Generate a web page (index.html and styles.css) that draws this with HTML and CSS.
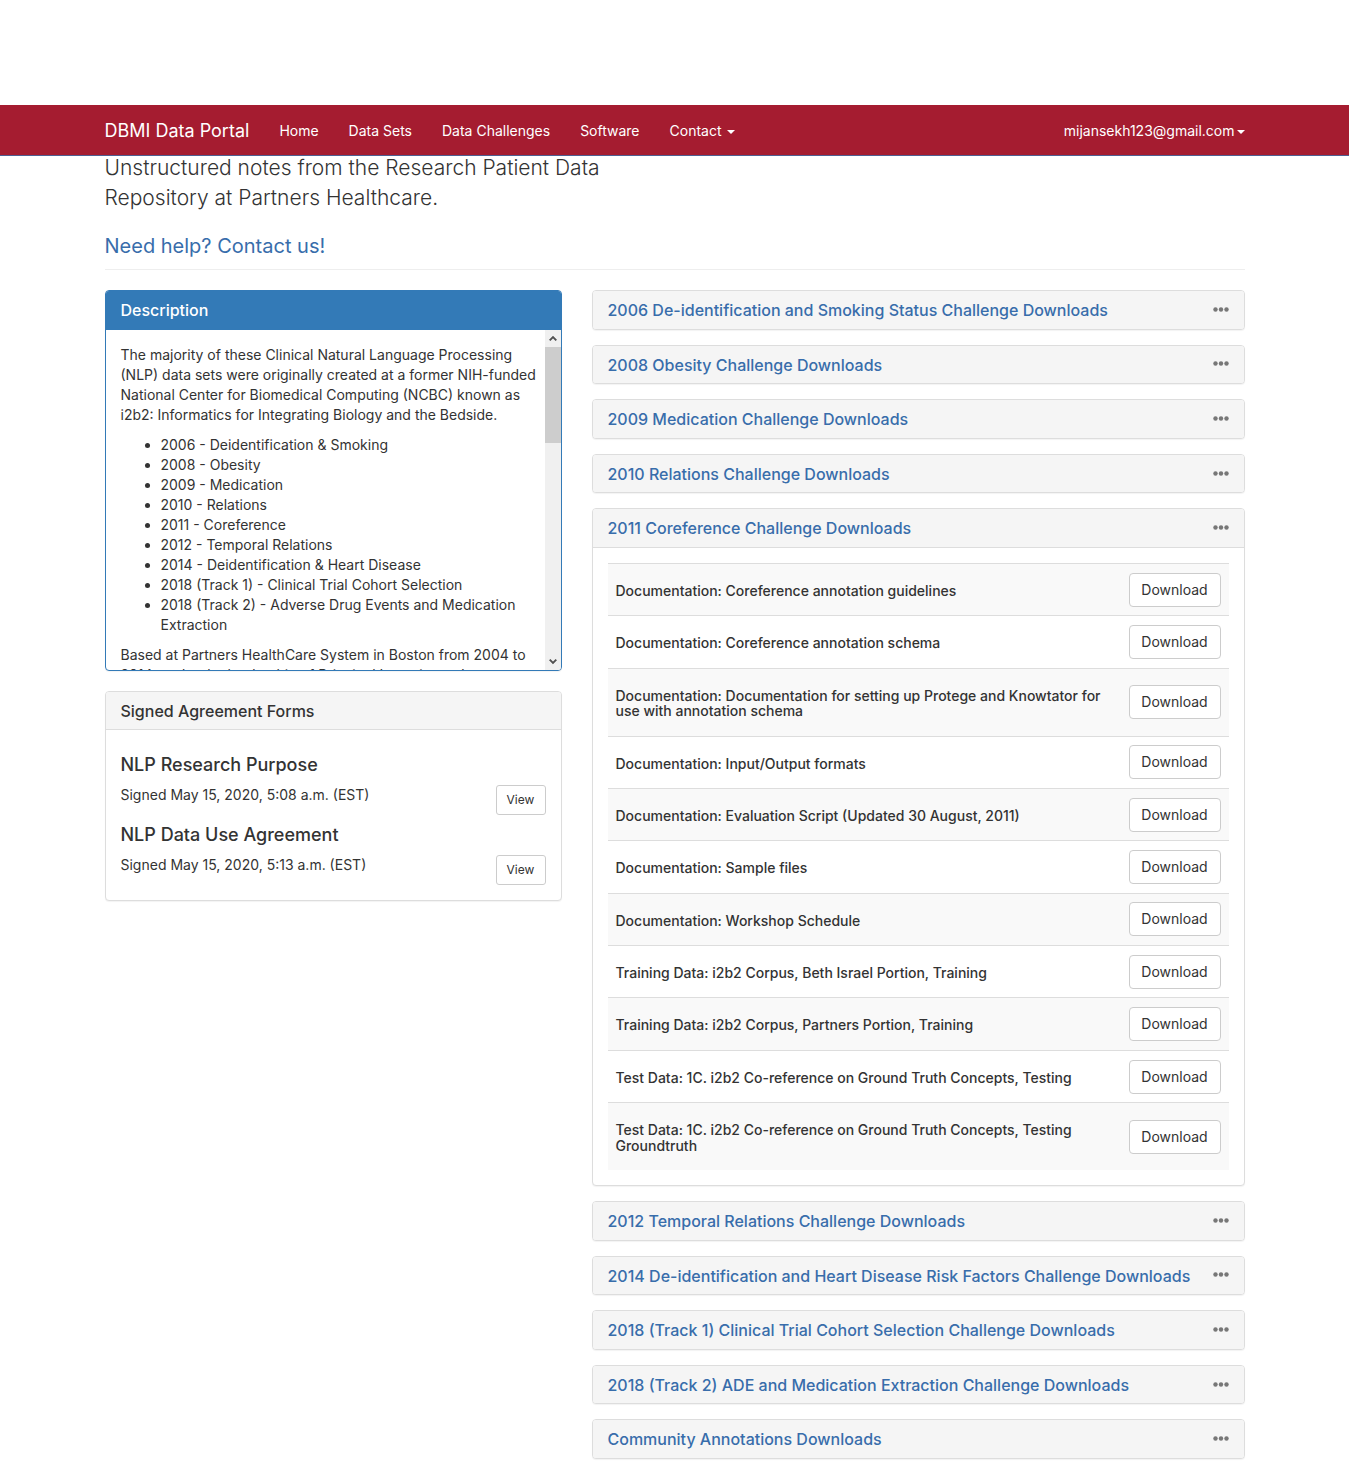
FILE: index.html
```html
<!DOCTYPE html>
<html lang="en">
<head>
<meta charset="utf-8">
<title>DBMI Data Portal</title>
<link rel="stylesheet" href="styles.css">
</head>
<body>
<nav class="navbar">
  <div class="container navbar-inner">
    <a class="brand" href="#">DBMI Data Portal</a>
    <a class="nav-link" href="#">Home</a>
    <a class="nav-link" href="#">Data Sets</a>
    <a class="nav-link" href="#">Data Challenges</a>
    <a class="nav-link" href="#">Software</a>
    <a class="nav-link" href="#">Contact <span class="caret"></span></a>
    <a class="nav-link account" href="#">mijansekh123@gmail.com<span class="caret"></span></a>
  </div>
</nav>
<main class="container">
  <header class="intro">
    <p class="lead">Unstructured notes from the Research Patient Data Repository at Partners Healthcare.</p>
    <a class="help" href="#">Need help? Contact us!</a>
  </header>
  <div class="columns">
    <div class="side">
      <section class="panel primary">
        <h2 class="panel-heading">Description</h2>
        <div class="scroll-area">
          <div class="scroll-text">
            <p>The majority of these Clinical Natural Language Processing (NLP) data sets were originally created at a former NIH-funded National Center for Biomedical Computing (NCBC) known as i2b2: Informatics for Integrating Biology and the Bedside.</p>
            <ul>
              <li>2006 - Deidentification &amp; Smoking</li>
              <li>2008 - Obesity</li>
              <li>2009 - Medication</li>
              <li>2010 - Relations</li>
              <li>2011 - Coreference</li>
              <li>2012 - Temporal Relations</li>
              <li>2014 - Deidentification &amp; Heart Disease</li>
              <li>2018 (Track 1) - Clinical Trial Cohort Selection</li>
              <li>2018 (Track 2) - Adverse Drug Events and Medication Extraction</li>
            </ul>
            <p>Based at Partners HealthCare System in Boston from 2004 to 2014, under the leadership of Principal Investigator Isaac Kohane.</p>
          </div>
          <div class="scrollbar" aria-hidden="true">
            <svg class="arrow" viewBox="0 0 17 17"><path d="M5 10.5 8.500 7l3.500 3.500" /></svg>
            <div class="thumb"></div>
            <svg class="arrow" viewBox="0 0 17 17"><path d="M5 6.500 8.500 10l3.500-3.500" /></svg>
          </div>
        </div>
      </section>
      <section class="panel">
        <h2 class="panel-heading">Signed Agreement Forms</h2>
        <div class="panel-body">
          <h3 class="form-name">NLP Research Purpose</h3>
          <div class="form-row"><span>Signed May 15, 2020, 5:08 a.m. (EST)</span><button class="btn small">View</button></div>
          <h3 class="form-name">NLP Data Use Agreement</h3>
          <div class="form-row"><span>Signed May 15, 2020, 5:13 a.m. (EST)</span><button class="btn small">View</button></div>
        </div>
      </section>
    </div>
    <div class="downloads">
      <section class="panel"><h2 class="panel-heading"><a href="#">2006 De-identification and Smoking Status Challenge Downloads</a><svg class="dots" viewBox="0 0 16 5"><circle cx="2.500" cy="2.500" r="2.200"/><circle cx="8" cy="2.500" r="2.200"/><circle cx="13.500" cy="2.500" r="2.200"/></svg></h2></section>
      <section class="panel"><h2 class="panel-heading"><a href="#">2008 Obesity Challenge Downloads</a><svg class="dots" viewBox="0 0 16 5"><circle cx="2.500" cy="2.500" r="2.200"/><circle cx="8" cy="2.500" r="2.200"/><circle cx="13.500" cy="2.500" r="2.200"/></svg></h2></section>
      <section class="panel"><h2 class="panel-heading"><a href="#">2009 Medication Challenge Downloads</a><svg class="dots" viewBox="0 0 16 5"><circle cx="2.500" cy="2.500" r="2.200"/><circle cx="8" cy="2.500" r="2.200"/><circle cx="13.500" cy="2.500" r="2.200"/></svg></h2></section>
      <section class="panel"><h2 class="panel-heading"><a href="#">2010 Relations Challenge Downloads</a><svg class="dots" viewBox="0 0 16 5"><circle cx="2.500" cy="2.500" r="2.200"/><circle cx="8" cy="2.500" r="2.200"/><circle cx="13.500" cy="2.500" r="2.200"/></svg></h2></section>
      <section class="panel">
        <h2 class="panel-heading"><a href="#">2011 Coreference Challenge Downloads</a><svg class="dots" viewBox="0 0 16 5"><circle cx="2.500" cy="2.500" r="2.200"/><circle cx="8" cy="2.500" r="2.200"/><circle cx="13.500" cy="2.500" r="2.200"/></svg></h2>
        <div class="panel-body">
          <table class="files">
            <tbody>
              <tr><th scope="row">Documentation: Coreference annotation guidelines</th><td><button class="btn">Download</button></td></tr>
              <tr><th scope="row">Documentation: Coreference annotation schema</th><td><button class="btn">Download</button></td></tr>
              <tr><th scope="row">Documentation: Documentation for setting up Protege and Knowtator for use with annotation schema</th><td><button class="btn">Download</button></td></tr>
              <tr><th scope="row">Documentation: Input/Output formats</th><td><button class="btn">Download</button></td></tr>
              <tr><th scope="row">Documentation: Evaluation Script (Updated 30 August, 2011)</th><td><button class="btn">Download</button></td></tr>
              <tr><th scope="row">Documentation: Sample files</th><td><button class="btn">Download</button></td></tr>
              <tr><th scope="row">Documentation: Workshop Schedule</th><td><button class="btn">Download</button></td></tr>
              <tr><th scope="row">Training Data: i2b2 Corpus, Beth Israel Portion, Training</th><td><button class="btn">Download</button></td></tr>
              <tr><th scope="row">Training Data: i2b2 Corpus, Partners Portion, Training</th><td><button class="btn">Download</button></td></tr>
              <tr><th scope="row">Test Data: 1C. i2b2 Co-reference on Ground Truth Concepts, Testing</th><td><button class="btn">Download</button></td></tr>
              <tr><th scope="row">Test Data: 1C. i2b2 Co-reference on Ground Truth Concepts, Testing Groundtruth</th><td><button class="btn">Download</button></td></tr>
            </tbody>
          </table>
        </div>
      </section>
      <section class="panel"><h2 class="panel-heading"><a href="#">2012 Temporal Relations Challenge Downloads</a><svg class="dots" viewBox="0 0 16 5"><circle cx="2.500" cy="2.500" r="2.200"/><circle cx="8" cy="2.500" r="2.200"/><circle cx="13.500" cy="2.500" r="2.200"/></svg></h2></section>
      <section class="panel"><h2 class="panel-heading"><a href="#">2014 De-identification and Heart Disease Risk Factors Challenge Downloads</a><svg class="dots" viewBox="0 0 16 5"><circle cx="2.500" cy="2.500" r="2.200"/><circle cx="8" cy="2.500" r="2.200"/><circle cx="13.500" cy="2.500" r="2.200"/></svg></h2></section>
      <section class="panel"><h2 class="panel-heading"><a href="#">2018 (Track 1) Clinical Trial Cohort Selection Challenge Downloads</a><svg class="dots" viewBox="0 0 16 5"><circle cx="2.500" cy="2.500" r="2.200"/><circle cx="8" cy="2.500" r="2.200"/><circle cx="13.500" cy="2.500" r="2.200"/></svg></h2></section>
      <section class="panel"><h2 class="panel-heading"><a href="#">2018 (Track 2) ADE and Medication Extraction Challenge Downloads</a><svg class="dots" viewBox="0 0 16 5"><circle cx="2.500" cy="2.500" r="2.200"/><circle cx="8" cy="2.500" r="2.200"/><circle cx="13.500" cy="2.500" r="2.200"/></svg></h2></section>
      <section class="panel"><h2 class="panel-heading"><a href="#">Community Annotations Downloads</a><svg class="dots" viewBox="0 0 16 5"><circle cx="2.500" cy="2.500" r="2.200"/><circle cx="8" cy="2.500" r="2.200"/><circle cx="13.500" cy="2.500" r="2.200"/></svg></h2></section>
    </div>
  </div>
</main>
</body>
</html>
```
FILE: styles.css
```css
* { box-sizing: border-box; }

body {
  margin: 0;
  padding-top: 105px;
  background: #fff;
  color: #333;
  font: 14px/20px Inter, "Liberation Sans", sans-serif;
}

a { color: #386dab; text-decoration: none; }
h2, h3, p, ul { margin: 0; }

.container {
  width: 100%;
  max-width: 1170px;
  margin: 0 auto;
  padding: 0 15px;
}

/* Top bar */
.navbar {
  position: relative;
  z-index: 1;
  background: #a51c30;
  border-bottom: 1px solid #4e5f92;
}
.navbar-inner {
  display: flex;
  align-items: center;
  gap: 30px;
  min-height: 50px;
  padding-top: 2px;
}
.navbar a { color: #fff; }
.brand { font-size: 18px; }
.account { margin-left: auto; }
.caret {
  display: inline-block;
  margin-left: 2px;
  vertical-align: middle;
  border-top: 4px solid;
  border-left: 4px solid transparent;
  border-right: 4px solid transparent;
}

/* Page intro; its first line tucks under the bar */
.intro {
  margin-top: -3px;
  padding-bottom: 9px;
  border-bottom: 1px solid #eee;
}
.lead {
  max-width: 555px;
  margin-bottom: 20px;
  font-size: 21px;
  font-weight: 300;
  line-height: 30px;
}
.help { display: block; font-size: 20px; line-height: 27px; }

/* Two columns */
.columns {
  display: grid;
  grid-template-columns: minmax(0, 457fr) minmax(0, 653fr);
  align-items: start;
  gap: 30px;
  padding: 20px 0;
}
.side { display: grid; gap: 20px; }
.downloads { display: grid; gap: 15px; }

.panel {
  min-width: 0;
  overflow: hidden;
  background: #fff;
  border: 1px solid #ddd;
  border-radius: 4px;
  box-shadow: 0 1px 1px rgba(0, 0, 0, .05);
}
.panel-heading {
  display: flex;
  justify-content: space-between;
  align-items: center;
  padding: 11px 15px 9px;
  background: #f5f5f5;
  font-size: 16px;
  font-weight: 500;
  line-height: 1.1;
}
.panel-body { padding: 15px; border-top: 1px solid #ddd; }
.primary { border-color: #337ab7; }
.primary .panel-heading {
  border-bottom: 1px solid #337ab7;
  background: #337ab7;
  color: #fff;
}
.dots { width: 16px; height: 5px; margin-bottom: 3px; fill: #777; }

/* Description */
.scroll-area { display: flex; height: 340px; }
.scroll-text {
  flex: 1;
  padding: 15px 8px 15px 15px;
  overflow-y: auto;
  scrollbar-width: none;
}
.scroll-text p, .scroll-text ul { margin-bottom: 10px; }
.scroll-text ul { padding-left: 40px; }
.scrollbar {
  display: flex;
  flex-direction: column;
  width: 16px;
  background: #f0f0f0;
}
.arrow {
  width: 16px;
  height: 17px;
  fill: none;
  stroke: #505050;
  stroke-width: 2;
}
.arrow:last-child { margin-top: auto; }
.thumb { height: 96px; background: #cdcdcd; }

/* Signed forms */
.form-name { margin: 10px 0; font-size: 18px; font-weight: 500; line-height: 1.1; }
.form-row { display: flex; justify-content: space-between; }

.btn {
  min-width: 92px;
  padding: 6px 11px;
  border: 1px solid #ccc;
  border-radius: 4px;
  background: #fff;
  color: #333;
  font: inherit;
  font-weight: 400;
  line-height: 20px;
}
.btn.small { min-width: 50px; padding: 5px 10px; border-radius: 3px; font-size: 12px; line-height: 18px; }

/* File list */
.files { width: 100%; border-collapse: collapse; }
.files th, .files td { border-top: 1px solid #ddd; vertical-align: middle; }
.files th { padding: 19px 8px 17px; font-weight: 500; line-height: 1.1; text-align: left; }
.files td { width: 108px; padding: 8px; text-align: right; }
.files tr:nth-child(odd) { background: #f9f9f9; }
```
